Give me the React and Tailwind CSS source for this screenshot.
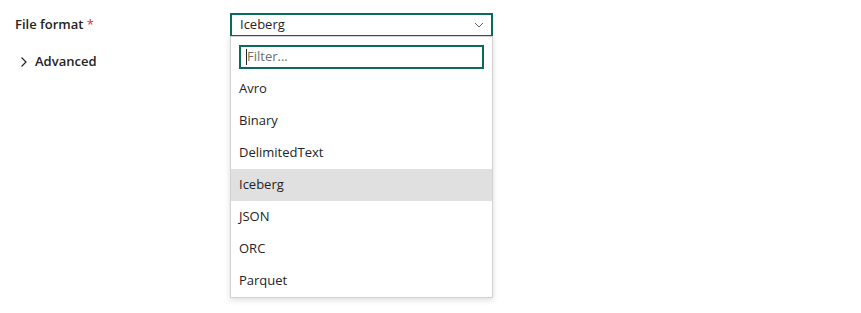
import React from 'react';

const options = ['Avro', 'Binary', 'DelimitedText', 'Iceberg', 'JSON', 'ORC', 'Parquet'];

const App = () => {
  const selected = 'Iceberg';
  return (
    <div className="relative h-[313px] w-[861px] bg-white font-['Segoe_UI','Open_Sans',sans-serif] text-[13px] text-[#242424]">
      <div className="flex flex-col pl-[15px] pt-[13px]">
        <div className="flex items-start">
          <label className="flex h-[23px] w-[215px] items-center font-semibold">
            File format&nbsp;<span className="font-normal text-[#d13438]">*</span>
          </label>
          <div className="relative w-[263px]">
            <button className="flex h-[24px] w-full items-center justify-between border-2 border-[#0b6a5d] bg-white pl-[8px] pr-[7px] text-left">
              <span>{selected}</span>
              <svg width="10" height="6" viewBox="0 0 10 6" fill="none">
                <path d="M1 1l4 4 4-4" stroke="#616161" strokeWidth="1" />
              </svg>
            </button>
            {/* dropdown */}
            <div className="absolute left-0 top-[23px] w-full border border-[#d1d1d1] bg-white shadow-[0_2px_6px_rgba(0,0,0,0.14)]">
              <div className="px-[8px] pb-[4px] pt-[8px]">
                <div className="flex h-[24px] items-center border-2 border-[#0b6a5d] pl-[5px]">
                  <span className="h-[16px] w-px bg-[#242424]" />
                  <span className="text-[#707070]">Filter...</span>
                </div>
              </div>
              <ul>
                {options.map((o) => (
                  <li
                    key={o}
                    className={`flex h-[32px] items-center pl-[8px] ${o === selected ? 'bg-[#e0e0e0]' : ''}`}
                  >
                    {o}
                  </li>
                ))}
              </ul>
            </div>
          </div>
        </div>
        <div className="mt-[15px] flex h-[20px] items-center">
          <svg width="8" height="12" viewBox="0 0 8 12" fill="none" className="ml-[5px] mr-[7px]">
            <path d="M1.5 1.5l4.5 4.5-4.5 4.5" stroke="#242424" strokeWidth="1.2" />
          </svg>
          <span className="font-semibold">Advanced</span>
        </div>
      </div>
    </div>
  );
};

export default App;
